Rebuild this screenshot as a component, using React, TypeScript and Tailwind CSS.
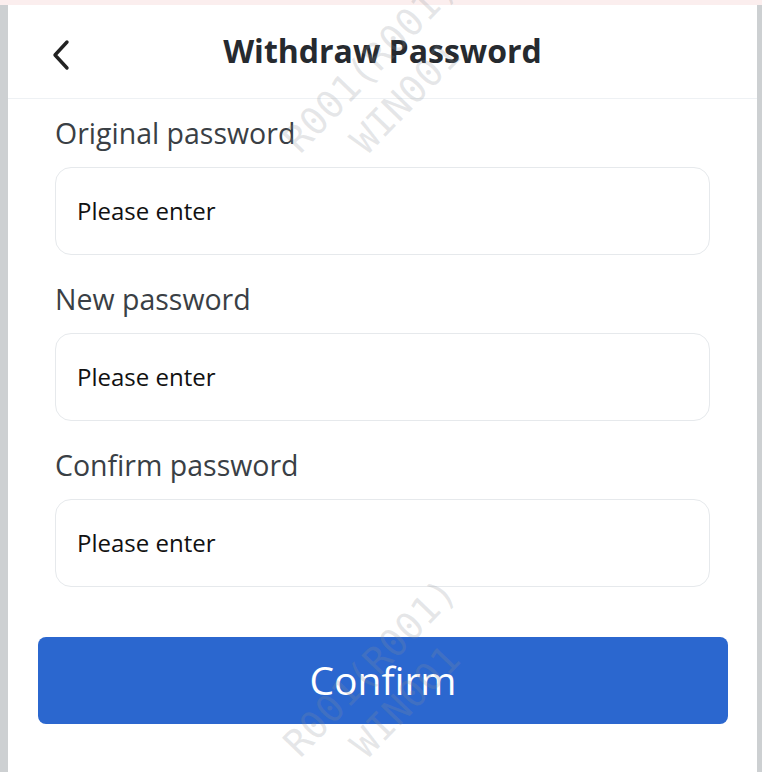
import React from "react";

const font = { fontFamily: '"Open Sans", "Noto Sans", sans-serif' };

function Field({ label }: { label: string }) {
  return (
    <div className="flex flex-col">
      <div className="h-[34px] flex items-center text-[28.5px] text-[#3a3f45]">{label}</div>
      <div className="mt-[17px] h-[88px] rounded-[16px] border border-[#e6e9ec] bg-white flex items-center pl-[21px] text-[24px] text-[#111]">
        Please enter
      </div>
    </div>
  );
}

function Watermark({ className }: { className: string }) {
  return (
    <div
      className={`absolute -translate-x-1/2 -translate-y-1/2 -rotate-[46deg] text-[38px] leading-[49px] text-center whitespace-nowrap text-[rgba(140,145,150,0.22)] pointer-events-none select-none ${className}`}
      style={{ fontFamily: '"DejaVu Sans Mono", monospace' }}
    >
      R001(R001)
      <br />
      WIN001
    </div>
  );
}

export default function App() {
  return (
    <div className="w-[762px] h-[772px] bg-[#cdd0d2] pt-[5px] pl-[8px] pr-[5px] relative overflow-hidden" style={font}>
      <div className="absolute left-0 top-0 w-full h-[5px] bg-[#fbeeee]" />
      <div className="h-full bg-white flex flex-col">
        <div className="h-[94px] relative flex items-center justify-center border-b border-[#eef1f4]">
          <svg className="absolute left-[42px] top-[34px]" width="22" height="32" viewBox="0 0 22 32">
            <path d="M17 3 L5 16 L17 29" fill="none" stroke="#222" strokeWidth="3.4" strokeLinecap="round" strokeLinejoin="round" />
          </svg>
          <div className="text-[32px] font-bold text-[#262a2f] -mt-[1px]">Withdraw Password</div>
        </div>
        <div className="px-[47px] pt-[17px] flex flex-col gap-[27px]">
          <Field label="Original password" />
          <Field label="New password" />
          <Field label="Confirm password" />
        </div>
        <div className="pl-[30px] pr-[29px] mt-[50px]">
          <div className="h-[87px] rounded-[8px] bg-[#2b67cf] flex items-center justify-center text-white text-[39px]">
            Confirm
          </div>
        </div>
      </div>
      <Watermark className="left-[388px] top-[81px]" />
      <Watermark className="left-[388px] top-[685px]" />
    </div>
  );
}
